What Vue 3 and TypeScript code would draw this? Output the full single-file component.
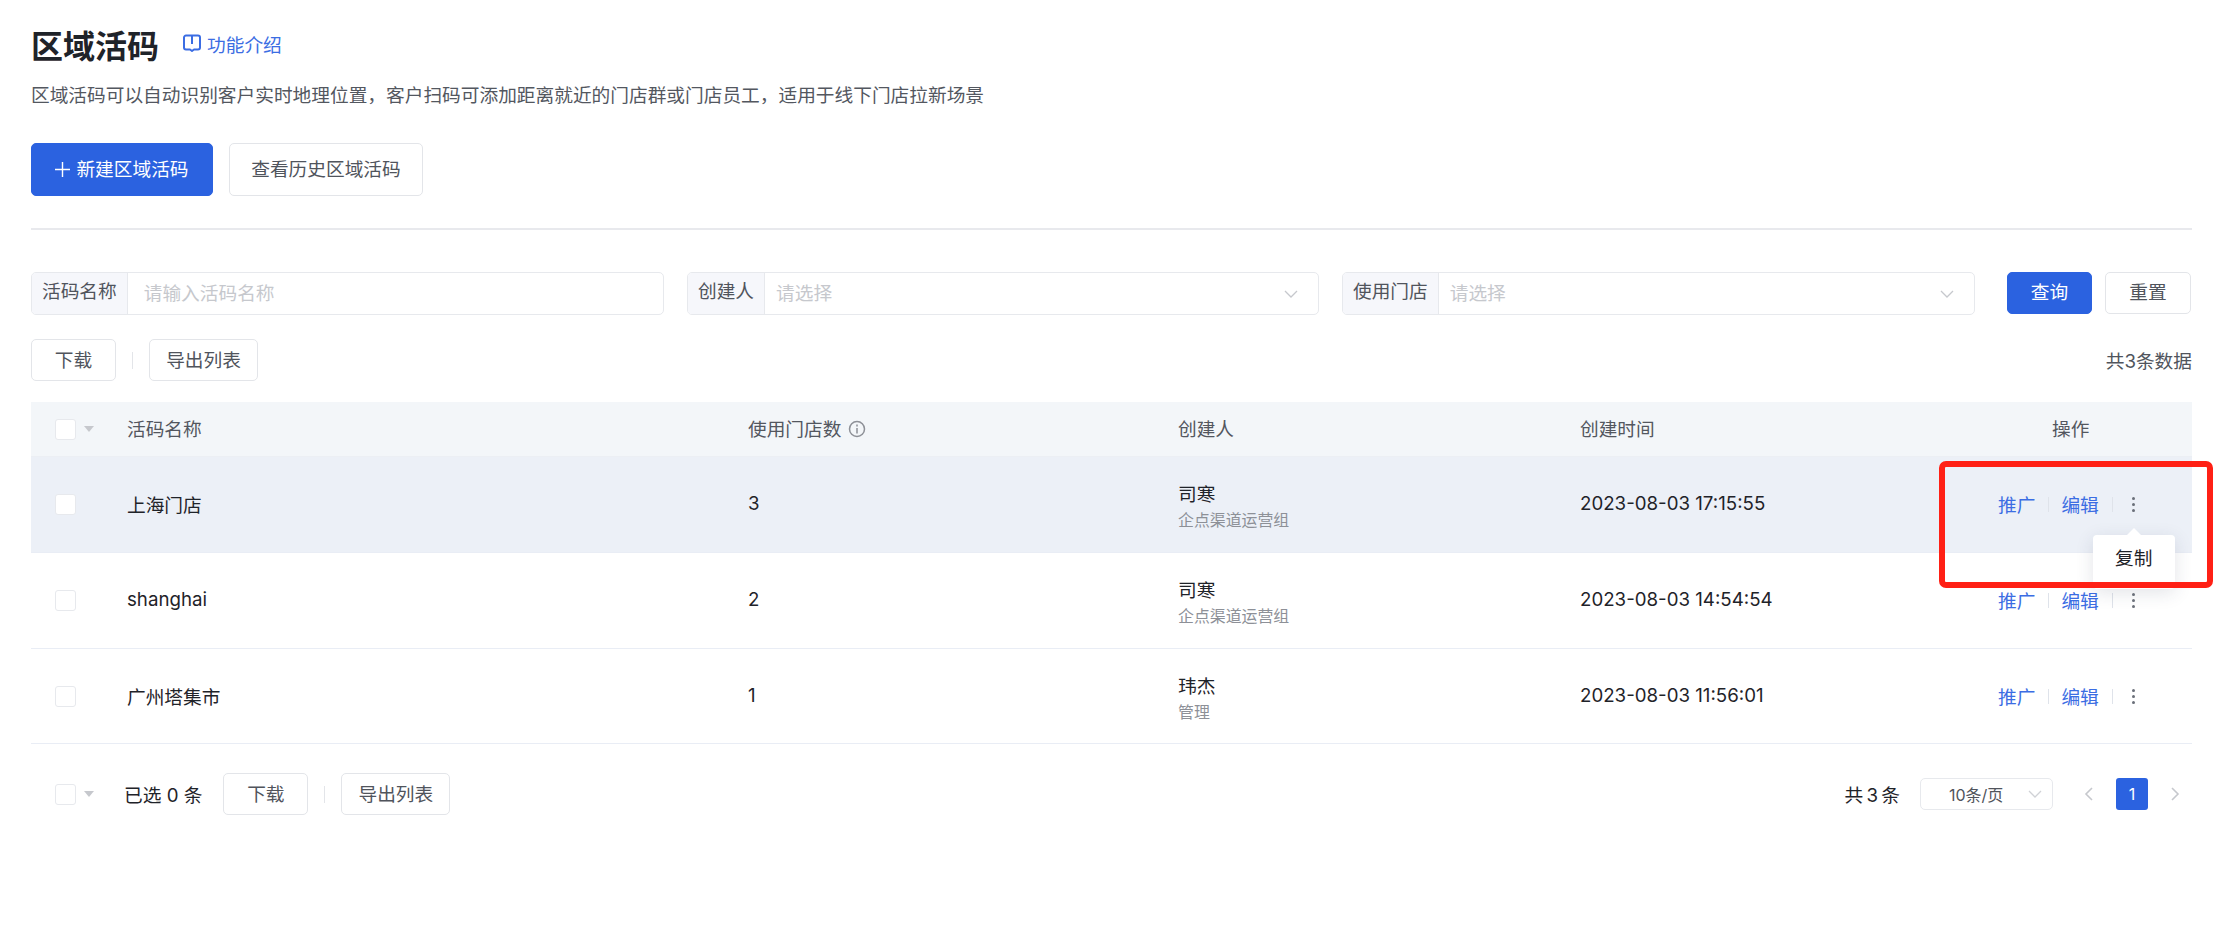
<script setup lang="ts">
interface Row {
  name: string
  stores: number
  creator: string
  team: string
  time: string
}

const rows: Row[] = [
  { name: '上海门店', stores: 3, creator: '司寒', team: '企点渠道运营组', time: '2023-08-03 17:15:55' },
  { name: 'shanghai', stores: 2, creator: '司寒', team: '企点渠道运营组', time: '2023-08-03 14:54:54' },
  { name: '广州塔集市', stores: 1, creator: '玮杰', team: '管理', time: '2023-08-03 11:56:01' },
]
</script>

<template>
  <div class="page">
    <div class="title-line">
      <h1 class="title">区域活码</h1>
      <a class="intro">
        <svg class="intro-icon" viewBox="0 0 20 20" fill="none" stroke="currentColor" stroke-width="2">
          <path d="M4 2.5h12a2 2 0 0 1 2 2v10a2 2 0 0 1-2 2h-4l-2 1.5-2-1.5H4a2 2 0 0 1-2-2v-10a2 2 0 0 1 2-2Z" stroke-linejoin="round" />
          <path d="M10 3v8" />
        </svg>
        功能介绍
      </a>
    </div>
    <p class="desc">区域活码可以自动识别客户实时地理位置，客户扫码可添加距离就近的门店群或门店员工，适用于线下门店拉新场景</p>

    <div class="top-actions">
      <button class="btn primary create">
        <svg class="plus" viewBox="0 0 16 16" stroke="currentColor" stroke-width="1.5"><path d="M8 0v16M0 8h16" /></svg>
        新建区域活码
      </button>
      <button class="btn history">查看历史区域活码</button>
    </div>
    <div class="divider"></div>

    <div class="filters">
      <div class="field f-name">
        <span class="label">活码名称</span>
        <span class="value">请输入活码名称</span>
      </div>
      <div class="field f-creator">
        <span class="label">创建人</span>
        <span class="value sel">请选择</span>
        <svg class="chevron" viewBox="0 0 14 8" fill="none" stroke="currentColor" stroke-width="1.3"><path d="M1 1l6 6 6-6" /></svg>
      </div>
      <div class="field f-store">
        <span class="label">使用门店</span>
        <span class="value sel">请选择</span>
        <svg class="chevron" viewBox="0 0 14 8" fill="none" stroke="currentColor" stroke-width="1.3"><path d="M1 1l6 6 6-6" /></svg>
      </div>
      <button class="btn primary query">查询</button>
      <button class="btn reset">重置</button>
    </div>

    <div class="toolbar">
      <button class="btn small-btn dl">下载</button>
      <span class="tool-sep"></span>
      <button class="btn small-btn export">导出列表</button>
      <span class="count">共3条数据</span>
    </div>

    <div class="table">
      <div class="tr head">
        <div class="cell-check">
          <span class="checkbox"></span>
          <span class="caret"></span>
        </div>
        <div>活码名称</div>
        <div class="with-tip">
          使用门店数
          <svg class="tip" viewBox="0 0 18 18" fill="none" stroke="currentColor" stroke-width="1.5">
            <circle cx="9" cy="9" r="7.5" />
            <path d="M9 8v5.5M9 4.5v2" />
          </svg>
        </div>
        <div>创建人</div>
        <div>创建时间</div>
        <div class="head-op">操作</div>
      </div>
      <div v-for="(row, i) in rows" :key="row.name" class="tr body" :class="{ hover: i === 0 }">
        <div class="cell-check"><span class="checkbox"></span></div>
        <div class="txt">{{ row.name }}</div>
        <div class="txt">{{ row.stores }}</div>
        <div class="creator">
          <span>{{ row.creator }}</span>
          <span class="team">{{ row.team }}</span>
        </div>
        <div class="txt">{{ row.time }}</div>
        <div class="ops">
          <a>推广</a>
          <span class="op-sep"></span>
          <a>编辑</a>
          <span class="op-sep"></span>
          <span class="more">
            <i></i><i></i><i></i>
            <div v-if="i === 0" class="popover">复制</div>
          </span>
        </div>
      </div>
    </div>

    <div class="footer">
      <span class="checkbox foot-check"></span>
      <span class="caret"></span>
      <span class="selected">已选 0 条</span>
      <button class="btn small-btn dl">下载</button>
      <span class="tool-sep"></span>
      <button class="btn small-btn export">导出列表</button>
      <div class="pager">
        <span class="total">共 3 条</span>
        <div class="size">
          10条/页
          <svg class="chevron" viewBox="0 0 14 8" fill="none" stroke="currentColor" stroke-width="1.3"><path d="M1 1l6 6 6-6" /></svg>
        </div>
        <svg class="arrow left" viewBox="0 0 9 14" fill="none" stroke="currentColor" stroke-width="1.6"><path d="M8 1L2 7l6 6" /></svg>
        <span class="current">1</span>
        <svg class="arrow right" viewBox="0 0 9 14" fill="none" stroke="currentColor" stroke-width="1.6"><path d="M1 1l6 6-6 6" /></svg>
      </div>
    </div>

    <div class="red-box"></div>
  </div>
</template>

<style>
html, body {
  background: #fff;
}
</style>

<style scoped>
.page {
  position: relative;
  box-sizing: border-box;
  width: 2230px;
  height: 932px;
  overflow: hidden;
  padding: 30px 38px 0 31px;
  font-family: Inter, "Noto Sans CJK SC", sans-serif;
  font-size: 18.7px;
  color: #1f2329;
}
.title-line {
  display: flex;
  align-items: center;
  height: 34px;
}
.title {
  margin: 0;
  font-size: 32px;
  line-height: 34px;
  font-weight: 700;
}
.intro {
  display: flex;
  align-items: center;
  margin-left: 23px;
  padding-bottom: 8px;
  color: #3b6de3;
}
.intro-icon {
  width: 20px;
  height: 20px;
  margin-right: 5px;
}
.desc {
  margin: 19px 0 0;
  height: 27px;
  line-height: 26px;
  color: #53575f;
}
.btn {
  box-sizing: border-box;
  display: inline-flex;
  align-items: center;
  justify-content: center;
  padding: 0 0 4px;
  background: #fff;
  border: 1.5px solid #e3e5e9;
  border-radius: 5px;
  font: inherit;
  color: #50545c;
}
.btn.primary {
  background: #2b62e0;
  border-color: #2b62e0;
  color: #fff;
}
.top-actions {
  display: flex;
  gap: 16px;
  margin-top: 33px;
}
.create {
  width: 182px;
  height: 53px;
}
.plus {
  width: 15px;
  height: 15px;
  margin-right: 6px;
  margin-top: 3px;
}
.history {
  width: 194px;
  height: 53px;
}
.divider {
  height: 2px;
  margin-top: 32px;
  background: #e8e9ed;
}
.filters {
  display: flex;
  margin-top: 42px;
}
.field {
  box-sizing: border-box;
  display: flex;
  align-items: center;
  height: 43px;
  border: 1.5px solid #e7e9ed;
  border-radius: 5px;
  overflow: hidden;
}
.f-name { width: 633px; }
.f-creator { width: 632px; margin-left: 23px; }
.f-store { width: 633px; margin-left: 23px; }
.label {
  box-sizing: border-box;
  flex: none;
  height: 100%;
  padding: 0 10px;
  line-height: 38px;
  background: #f6f7fb;
  border-right: 1px solid #e7e9ed;
  color: #50545c;
}
.value {
  flex: 1;
  padding: 0 0 4px 16px;
  color: #c6c8cd;
}
.value.sel {
  padding-left: 11px;
}
.chevron {
  flex: none;
  width: 14px;
  height: 8px;
  color: #c6c8cd;
}
.field .chevron {
  margin-right: 20px;
}
.query {
  width: 85px;
  height: 42px;
  margin-left: 32px;
  padding-bottom: 5px;
}
.reset {
  width: 86px;
  height: 42px;
  margin-left: 13px;
  padding-bottom: 5px;
}
.toolbar {
  display: flex;
  align-items: center;
  height: 42px;
  margin-top: 24px;
}
.small-btn {
  height: 42px;
}
.small-btn.dl { width: 85px; }
.small-btn.export { width: 109px; }
.tool-sep {
  width: 1px;
  height: 17px;
  margin: 0 16px;
  background: #e3e5e9;
}
.count {
  margin-left: auto;
  padding-bottom: 2px;
  color: #50545c;
}
.table {
  margin-top: 21px;
}
.tr {
  box-sizing: border-box;
  display: grid;
  grid-template-columns: 96px 621px 430px 402px 400px 1fr;
  align-items: center;
}
.tr.head {
  height: 55px;
  background: #f3f6f9;
  border-bottom: 1px solid #eceff4;
  color: #53575f;
}
.tr.head > div:not(.cell-check) {
  padding-bottom: 3px;
}
.tr.body {
  height: 96px;
  border-bottom: 1px solid #e9edf5;
}
.tr.body.hover {
  background: #ecf0f7;
}
.tr.body:last-child {
  height: 95px;
}
.txt {
  padding-bottom: 2px;
}
.cell-check {
  display: flex;
  align-items: center;
  padding-left: 24px;
}
.checkbox {
  box-sizing: border-box;
  display: block;
  flex: none;
  width: 21px;
  height: 21px;
  background: #fff;
  border: 1.5px solid #e7e9ed;
  border-radius: 3px;
}
.caret {
  flex: none;
  width: 0;
  height: 0;
  margin-left: 8px;
  border-left: 5px solid transparent;
  border-right: 5px solid transparent;
  border-top: 6px solid #c6c8cd;
}
.with-tip {
  display: flex;
  align-items: center;
}
.tip {
  width: 18px;
  height: 18px;
  margin-left: 7px;
  margin-top: 3px;
  color: #8d9097;
}
.head-op {
  padding-left: 72px;
}
.creator {
  display: flex;
  flex-direction: column;
  gap: 3px;
  padding-top: 6px;
  line-height: 24px;
}
.team {
  font-size: 15.9px;
  line-height: 22px;
  color: #8d9097;
}
.ops {
  display: flex;
  align-items: center;
  padding-left: 18px;
  color: #3b6de3;
  white-space: nowrap;
}
.ops a {
  padding-bottom: 2px;
}
.op-sep {
  flex: none;
  width: 1px;
  height: 15px;
  margin: 0 12px 0 13px;
  background: #dfe3ea;
}
.more {
  position: relative;
  display: flex;
  flex-direction: column;
  align-items: center;
  gap: 3px;
  width: 16px;
  margin-left: 1px;
}
.more i {
  width: 3px;
  height: 3px;
  border-radius: 50%;
  background: #6a6f79;
}
.popover {
  position: absolute;
  top: 38px;
  left: 50%;
  width: 82px;
  height: 54px;
  margin-left: -41px;
  background: #fff;
  border-radius: 4px;
  box-shadow: 0 4px 18px rgba(40, 50, 80, 0.13);
  color: #1f2329;
  line-height: 48px;
  text-align: center;
}
.popover::before {
  content: "";
  position: absolute;
  top: -7px;
  left: 50%;
  margin-left: -7px;
  border-left: 7px solid transparent;
  border-right: 7px solid transparent;
  border-bottom: 7px solid #fff;
}
.footer {
  display: flex;
  align-items: center;
  height: 42px;
  margin-top: 29px;
}
.foot-check {
  margin-left: 24px;
}
.selected {
  margin-left: 30px;
  margin-right: 21px;
  padding-bottom: 2px;
}
.pager {
  display: flex;
  align-items: center;
  margin-left: auto;
  padding-right: 12px;
}
.total {
  padding-bottom: 2px;
  word-spacing: -2px;
}
.size {
  box-sizing: border-box;
  display: flex;
  align-items: center;
  width: 133px;
  height: 32px;
  margin-left: 20px;
  padding-left: 28px;
  border: 1.5px solid #e7e9ed;
  border-radius: 5px;
  font-size: 16px;
  color: #50545c;
}
.size .chevron {
  margin-left: auto;
  margin-right: 10px;
  color: #d0d2d6;
}
.arrow {
  width: 9px;
  height: 14px;
  color: #c6c8cd;
}
.arrow.left {
  margin-left: 31px;
}
.current {
  width: 32px;
  height: 32px;
  margin: 0 23px;
  background: #2b62e0;
  border-radius: 3px;
  color: #fff;
  font-size: 16px;
  line-height: 32px;
  text-align: center;
}
.red-box {
  position: absolute;
  left: 1939px;
  top: 461px;
  box-sizing: border-box;
  width: 274px;
  height: 127px;
  border: 6px solid #ff2015;
  border-radius: 7px;
  pointer-events: none;
}
</style>
